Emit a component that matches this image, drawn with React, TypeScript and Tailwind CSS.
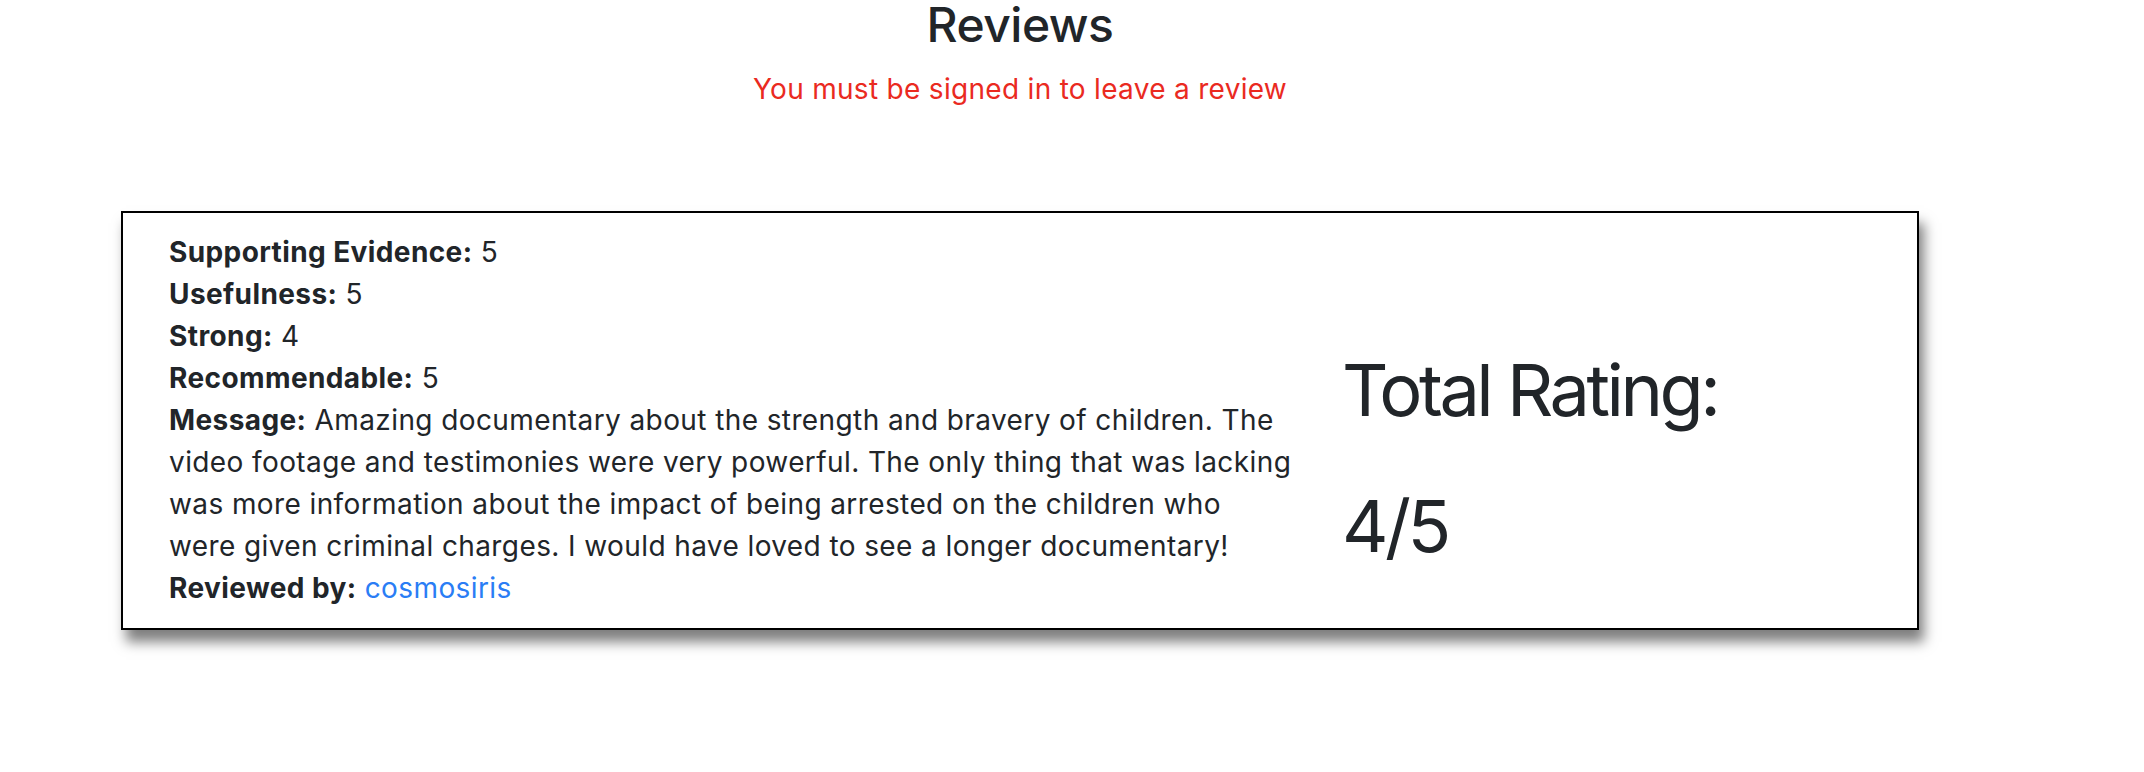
export default function App() {
  return (
    <main className="min-h-screen w-full bg-white font-['Inter',sans-serif] text-[#212529]">
      <div className="w-[2040px]">
        {/* Header */}
        <h2 className="text-center text-[48px] font-medium leading-[50px] tracking-[-0.5px]">Reviews</h2>
        <p className="mt-[18px] text-center text-[28px] leading-[42px] tracking-[0.3px] text-[#ea2a1f]">
          You must be signed in to leave a review
        </p>

        {/* Review card */}
        <div className="mx-[121px] mt-[101px] flex border-2 border-black bg-white shadow-[5px_12px_12px_rgba(0,0,0,0.5)]">
          <div className="w-[1219px] pb-[19px] pl-[46px] pt-[18px] text-[28px] leading-[42px] tracking-[0.4px]">
            <div>
              <strong className="font-bold">Supporting Evidence:</strong> 5
            </div>
            <div>
              <strong className="font-bold">Usefulness:</strong> 5
            </div>
            <div>
              <strong className="font-bold">Strong:</strong> 4
            </div>
            <div>
              <strong className="font-bold">Recommendable:</strong> 5
            </div>
            <div className="whitespace-nowrap">
              <strong className="font-bold">Message:</strong> Amazing documentary about the strength and bravery of children. The
              <br />
              video footage and testimonies were very powerful. The only thing that was lacking
              <br />
              was more information about the impact of being arrested on the children who
              <br />
              were given criminal charges. I would have loved to see a longer documentary!
            </div>
            <div>
              <strong className="font-bold">Reviewed by:</strong>{" "}
              <a href="#" className="text-[#2a7df5]">
                cosmosiris
              </a>
            </div>
          </div>

          <div className="flex-1 pt-[134px] text-[72px] leading-[86px] tracking-[-3.5px]">
            <div>Total Rating:</div>
            <div className="mt-[50px]">4/5</div>
          </div>
        </div>
      </div>
    </main>
  );
}
